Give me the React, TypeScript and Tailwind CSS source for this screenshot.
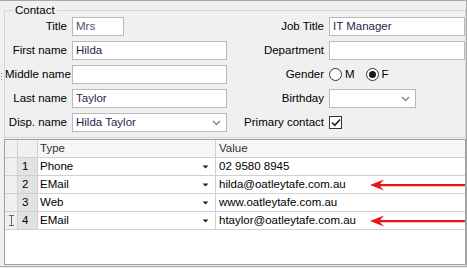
import React from "react";

const font = { fontFamily: '"Liberation Sans", Arial, sans-serif' };

function Chevron() {
  return (
    <svg width="9" height="6" viewBox="0 0 9 6" className="shrink-0">
      <path d="M1 1 L4.5 4.5 L8 1" fill="none" stroke="#8a8a8a" strokeWidth="1.5" />
    </svg>
  );
}

function TextBox({ value, className = "" }: { value?: string; className?: string }) {
  return (
    <div
      className={`h-[19px] whitespace-nowrap border border-[#b9b9b9] bg-white px-[3px] leading-[17px] text-[#1f1f4f] ${className}`}
    >
      {value}
    </div>
  );
}

function SelectBox({ value, className = "" }: { value?: string; className?: string }) {
  return (
    <div
      className={`flex h-[19px] items-center justify-between border border-[#b9b9b9] bg-white pl-[3px] pr-[5px] leading-[17px] text-[#1f1f4f] ${className}`}
    >
      <span>{value}</span>
      <Chevron />
    </div>
  );
}

function Radio({ checked, label }: { checked?: boolean; label: string }) {
  return (
    <div className="flex items-center gap-[3px]">
      <div className="flex h-[13px] w-[13px] items-center justify-center rounded-full border border-[#333] bg-white">
        {checked && <div className="h-[7px] w-[7px] rounded-full bg-[#1a1a1a]" />}
      </div>
      <span>{label}</span>
    </div>
  );
}

function Label({ children, w }: { children: React.ReactNode; w: string }) {
  return <div className={`${w} shrink-0 whitespace-nowrap text-right leading-[19px] text-black`}>{children}</div>;
}

function RedArrow() {
  return (
    <svg width="95" height="12" viewBox="0 0 95 12" className="absolute right-0 top-[3px]">
      <path d="M0 6 L14 0.5 L10 5 L95 5 L95 7.2 L10 7.2 L14 11.5 Z" fill="#e8141c" />
    </svg>
  );
}

function DropArrow() {
  return (
    <svg width="7" height="4" viewBox="0 0 7 4" className="mr-[6px] mt-[7px]">
      <path d="M0.5 0.5 L6.5 0.5 L3.5 3.5 Z" fill="#222" />
    </svg>
  );
}

const rows = [
  { n: 1, type: "Phone", value: "02 9580 8945", arrow: false },
  { n: 2, type: "EMail", value: "hilda@oatleytafe.com.au", arrow: true },
  { n: 3, type: "Web", value: "www.oatleytafe.com.au", arrow: false },
  { n: 4, type: "EMail", value: "htaylor@oatleytafe.com.au", arrow: true },
];

export default function App() {
  return (
    <div className="relative h-[268px] w-[467px] overflow-hidden bg-[#f0f0f0] text-[11.5px] text-black" style={font}>
      {/* splitter grip */}
      <div className="absolute left-[1px] top-[73px] flex flex-col gap-[2px]">
        <div className="h-px w-px bg-[#888]" />
        <div className="h-px w-px bg-[#888]" />
        <div className="h-px w-px bg-[#888]" />
      </div>
      <div className="flex h-[267px] flex-col border-b border-r border-t border-[#a8a8a8] pl-[4px]">
        <fieldset className="mt-[3px] border border-[#d5d5d5] px-0 pb-[5px]">
          <legend className="ml-[8px] px-[2px] leading-[13px]">Contact</legend>
          <div className="flex flex-col gap-[5px]">
            <div className="flex items-center">
              <Label w="w-[62px]">Title</Label>
              <TextBox value="Mrs" className="ml-[5px] w-[52px] text-[#505070]" />
              <Label w="w-[200px]">Job Title</Label>
              <TextBox value="IT Manager" className="ml-[5px] flex-1" />
            </div>
            <div className="flex items-center">
              <Label w="w-[62px]">First name</Label>
              <TextBox value="Hilda" className="ml-[5px] w-[155px]" />
              <Label w="w-[97px]">Department</Label>
              <TextBox className="ml-[5px] flex-1" />
            </div>
            <div className="flex items-center">
              <Label w="w-[62px]">Middle name</Label>
              <TextBox className="ml-[5px] w-[155px]" />
              <Label w="w-[97px]">Gender</Label>
              <div className="ml-[5px] flex items-center gap-[11px]">
                <Radio label="M" />
                <Radio label="F" checked />
              </div>
            </div>
            <div className="flex items-center">
              <Label w="w-[62px]">Last name</Label>
              <TextBox value="Taylor" className="ml-[5px] w-[155px]" />
              <Label w="w-[97px]">Birthday</Label>
              <SelectBox className="ml-[5px] w-[87px]" />
            </div>
            <div className="flex items-center">
              <Label w="w-[62px]">Disp. name</Label>
              <SelectBox value="Hilda Taylor" className="ml-[5px] w-[155px]" />
              <Label w="w-[97px]">Primary contact</Label>
              <div className="ml-[5px] flex h-[13px] w-[13px] items-center justify-center border border-[#333] bg-white">
                <svg width="10" height="9" viewBox="0 0 10 9">
                  <path d="M1 4.5 L3.8 7.3 L9 1.5" fill="none" stroke="#222" strokeWidth="1.6" />
                </svg>
              </div>
            </div>
          </div>
        </fieldset>

        <div className="mb-[1px] mt-[1px] flex flex-1 flex-col border border-[#a0a0a0] bg-white">
          <div className="flex h-[18px] border-b border-[#d0d0d0] leading-[17px]">
            <div className="w-[12px] bg-[#f0f0f0]" />
            <div className="w-[20px] border-l border-[#d0d0d0] bg-[#f0f0f0]" />
            <div className="w-[178px] border-l border-[#d0d0d0] bg-[#f6f6f6] pl-[2px] text-[#333]">Type</div>
            <div className="flex-1 border-l border-[#d0d0d0] bg-[#f6f6f6] pl-[3px] text-[#333]">Value</div>
          </div>
          {rows.map((r) => (
            <div key={r.n} className="flex h-[18px] border-b border-[#d0d0d0] leading-[17px]">
              <div className="flex w-[12px] items-center justify-center bg-[#f0f0f0]">
                {r.n === 4 && (
                  <svg width="5" height="11" viewBox="0 0 5 11">
                    <path d="M0 0.5 H5 M2.5 0.5 V10.5 M0 10.5 H5" stroke="#666" strokeWidth="1" fill="none" />
                  </svg>
                )}
              </div>
              <div className="w-[20px] border-l border-[#d0d0d0] bg-[#e2e2e2] pl-[4px]">{r.n}</div>
              <div className="flex w-[178px] justify-between border-l border-[#d0d0d0] pl-[2px]">
                <span>{r.type}</span>
                <DropArrow />
              </div>
              <div className="relative flex-1 border-l border-[#d0d0d0] pl-[3px]">
                {r.value}
                {r.arrow && <RedArrow />}
              </div>
            </div>
          ))}
        </div>
      </div>
    </div>
  );
}
